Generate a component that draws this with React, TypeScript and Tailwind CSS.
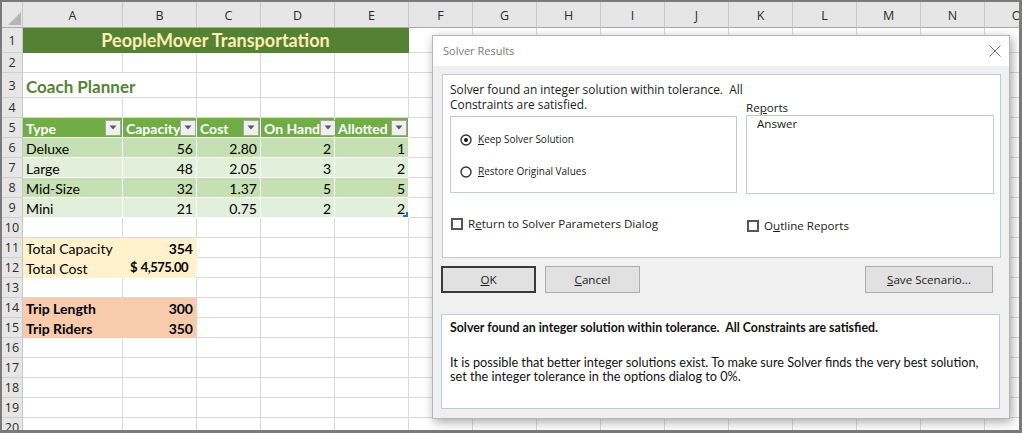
import React from "react";

const COLW = ["w-[100px]", "w-[74px]", "w-[64px]", "w-[74px]", "w-[74px]"];
const LET_AE = ["A", "B", "C", "D", "E"];
const LET_FO = ["F", "G", "H", "I", "J", "K", "L", "M", "N", "O"];

function HeaderRow() {
  const hc =
    "shrink-0 bg-[#e6e6e6] border-r border-b border-r-[#c8c8c8] border-b-[#ababab] flex items-center justify-center pt-[4px] text-[12.5px] text-[#2b2b2b] font-['Open_Sans',sans-serif]";
  return (
    <div className="flex h-[26px]">
      <div className="relative w-[21px] shrink-0 bg-[#e6e6e6] border-r border-b border-r-[#c8c8c8] border-b-[#ababab]">
        <svg className="absolute right-[1px] bottom-[2px]" width="13" height="13" viewBox="0 0 13 13">
          <path d="M13 0V13H0z" fill="#b6b6b6" />
        </svg>
      </div>
      {LET_AE.map((l, i) => (
        <div key={l} className={`${COLW[i]} ${hc}`}>
          {l}
        </div>
      ))}
      {LET_FO.map((l) => (
        <div key={l} className={`w-[64px] ${hc}`}>
          {l}
        </div>
      ))}
    </div>
  );
}

function Row({ n, h, children }: { n: number; h: string; children?: React.ReactNode }) {
  return (
    <div className={`flex ${h}`}>
      <div className="w-[21px] shrink-0 bg-[#e6e6e6] border-r border-b border-r-[#c8c8c8] border-b-[#d0d0d0] flex items-center justify-center pt-[2px] text-[12.5px] text-[#2b2b2b] font-['Open_Sans',sans-serif]">
        {n}
      </div>
      {children ??
        LET_AE.map((l, i) => <Cell key={l} i={i} />)}
      {LET_FO.map((l) => (
        <div key={l} className="w-[64px] shrink-0 border-r border-b border-[#d9d9d9]" />
      ))}
    </div>
  );
}

function Cell({
  i,
  b = "border-[#d9d9d9]",
  cls = "",
  children,
}: {
  i: number;
  b?: string;
  cls?: string;
  children?: React.ReactNode;
}) {
  return (
    <div className={`${COLW[i]} shrink-0 flex items-center border-r border-b whitespace-nowrap ${b} ${cls}`}>
      {children}
    </div>
  );
}

function Filter() {
  return (
    <div className="w-[16px] h-[16px] shrink-0 border border-[#a6a6a6] bg-[#f0f0f0] flex items-center justify-center">
      <svg width="8" height="5" viewBox="0 0 8 5">
        <path d="M0.5 0.5H7.5L4 4.5z" fill="#595959" />
      </svg>
    </div>
  );
}

function TH({ i, label }: { i: number; label: string }) {
  return (
    <Cell i={i} b="border-white" cls="bg-[#70ad47] justify-between pl-[3px] pr-[1px] text-white font-bold">
      <span className="pt-[1px]">{label}</span>
      <Filter />
    </Cell>
  );
}

const DATA: [string, string, string, string, string][] = [
  ["Deluxe", "56", "2.80", "2", "1"],
  ["Large", "48", "2.05", "3", "2"],
  ["Mid-Size", "32", "1.37", "5", "5"],
  ["Mini", "21", "0.75", "2", "2"],
];

function Dialog() {
  const border = "border border-[#c0cbd9]";
  return (
    <div className="absolute left-[432px] top-[35px] w-[578px] h-[384px] bg-[#f0f0f0] border border-[#b5b5b5] shadow-[2px_3px_10px_rgba(0,0,0,0.35)] font-['Open_Sans',sans-serif] text-[#1b1b1b]">
      <div className="h-[30px] bg-white flex items-center justify-between pl-[10px] pr-[8px]">
        <span className="text-[11px] text-[#7a7a7a]">Solver Results</span>
        <svg width="12" height="12" viewBox="0 0 12 12">
          <path d="M0.5 0.5L11.5 11.5M11.5 0.5L0.5 11.5" stroke="#707070" strokeWidth="1" />
        </svg>
      </div>
      <div className="pt-[8px]">
        <div className={`ml-[9px] w-[559px] h-[184px] bg-white ${border} pt-[7px] pl-[7px]`}>
          <div className="grid grid-cols-[287px_248px] gap-x-[9px] items-start">
            <div>
              <div className="text-[11.9px] leading-[15px] whitespace-nowrap">
                Solver found an integer solution within tolerance.&nbsp; All
                <br />
                Constraints are satisfied.
              </div>
              <div className={`mt-[4px] h-[77px] ${border} pt-[15px] pl-[9px] text-[10px] leading-[15px]`}>
                <div className="flex items-center gap-[6px]">
                  <svg width="12" height="12" viewBox="0 0 12 12">
                    <circle cx="6" cy="6" r="5" fill="white" stroke="#333" strokeWidth="1.4" />
                    <circle cx="6" cy="6" r="2" fill="#111" />
                  </svg>
                  <span>
                    <u>K</u>eep Solver Solution
                  </span>
                </div>
                <div className="mt-[17px] flex items-center gap-[6px]">
                  <svg width="12" height="12" viewBox="0 0 12 12">
                    <circle cx="6" cy="6" r="5" fill="white" stroke="#333" strokeWidth="1.4" />
                  </svg>
                  <span>
                    <u>R</u>estore Original Values
                  </span>
                </div>
              </div>
            </div>
            <div className="pt-[18px]">
              <div className="text-[11.6px] leading-[15px]">
                Re<u>p</u>orts
              </div>
              <div className={`h-[79px] ${border} pl-[10px] pt-[0px] text-[11.6px] leading-[15px]`}>Answer</div>
            </div>
          </div>
          <div className="grid grid-cols-[287px_248px] gap-x-[9px] mt-[22px] text-[11.6px] leading-[15px] items-start">
            <div className="ml-[1px] flex items-center gap-[5px]">
              <div className="w-[12px] h-[12px] border-2 border-[#555] bg-white" />
              <span>
                R<u>e</u>turn to Solver Parameters Dialog
              </span>
            </div>
            <div className="ml-[1px] mt-[2px] flex items-center gap-[5px]">
              <div className="w-[12px] h-[12px] border-2 border-[#555] bg-white" />
              <span>
                O<u>u</u>tline Reports
              </span>
            </div>
          </div>
        </div>
        <div className="flex mt-[8px] ml-[8px] text-[11.6px]">
          <div className="w-[95px] h-[27px] border-2 border-[#3a3a3a] bg-[#e1e1e1] flex items-center justify-center">
            <span>
              <u>O</u>K
            </span>
          </div>
          <div className="ml-[9px] w-[95px] h-[27px] border border-[#adadad] bg-[#e1e1e1] flex items-center justify-center">
            <span>
              <u>C</u>ancel
            </span>
          </div>
          <div className="ml-[225px] w-[128px] h-[27px] border border-[#adadad] bg-[#e1e1e1] flex items-center justify-center">
            <span>
              <u>S</u>ave Scenario...
            </span>
          </div>
        </div>
        <div className={`mt-[21px] ml-[8px] w-[559px] h-[95px] bg-white ${border} pt-[5px] pl-[8px] font-['Lato',sans-serif] text-[#111]`}>
          <div className="font-bold leading-[15px] text-[12.35px]">
            Solver found an integer solution within tolerance.&nbsp; All Constraints are satisfied.
          </div>
          <div className="mt-[20px] leading-[14px] text-[12.7px]">
            It is possible that better integer solutions exist. To make sure Solver finds the very best solution,
            <br />
            set the integer tolerance in the options dialog to 0%.
          </div>
        </div>
      </div>
    </div>
  );
}

export default function App() {
  const bands = ["bg-[#c6e0b4]", "bg-[#e2efda]", "bg-[#c6e0b4]", "bg-[#e2efda]"];
  return (
    <div className="relative w-[1022px] h-[433px] bg-[#7b7b7b] pt-[2px] pl-[2px] pr-[3px] pb-[3px] font-['Lato',sans-serif] text-[14px] text-black">
      <div className="w-full h-full overflow-hidden bg-white">
        <HeaderRow />
        <div className="flex h-[25px]">
          <div className="w-[21px] shrink-0 bg-[#e6e6e6] border-r border-b border-r-[#c8c8c8] border-b-[#d0d0d0] flex items-center justify-center pt-[3px] text-[12.5px] text-[#2b2b2b] font-['Open_Sans',sans-serif]">
            1
          </div>
          <div className="w-[386px] shrink-0 bg-[#548235] border-r border-b border-[#548235] flex items-center justify-center pt-[1px] text-[18px] font-bold text-[#ffeeb2]">
            PeopleMover Transportation
          </div>
          {LET_FO.map((l) => (
            <div key={l} className="w-[64px] shrink-0 border-r border-b border-[#d9d9d9]" />
          ))}
        </div>
        <Row n={2} h="h-[20px]" />
        <Row n={3} h="h-[25px]">
          <div className="w-[100px] shrink-0 flex items-center border-b border-[#d9d9d9] whitespace-nowrap pl-[3px] pt-[3px] text-[17px] font-bold text-[#548235] relative z-10">
            Coach Planner
          </div>
          <Cell i={1} />
          <Cell i={2} />
          <Cell i={3} />
          <Cell i={4} />
        </Row>
        <Row n={4} h="h-[20px]" />
        <Row n={5} h="h-[20px]">
          <TH i={0} label="Type" />
          <TH i={1} label="Capacity" />
          <TH i={2} label="Cost" />
          <TH i={3} label="On Hand" />
          <TH i={4} label="Allotted" />
        </Row>
        {DATA.map((r, k) => (
          <Row key={r[0]} n={6 + k} h="h-[20px]">
            <Cell i={0} b="border-white" cls={`${bands[k]} pl-[3px] pt-[1px]`}>
              {r[0]}
            </Cell>
            {[1, 2, 3, 4].map((i) => (
              <Cell key={i} i={i} b="border-white" cls={`${bands[k]} justify-end pr-[3px] pt-[1px] relative`}>
                {r[i]}
                {k === 3 && i === 4 ? (
                  <svg className="absolute right-[0px] bottom-[0px]" width="5" height="5" viewBox="0 0 5 5">
                    <path d="M5 0V5H0V3H3V0z" fill="#2f6fbf" />
                  </svg>
                ) : null}
              </Cell>
            ))}
          </Row>
        ))}
        <Row n={10} h="h-[20px]" />
        <Row n={11} h="h-[20px]">
          <Cell i={0} b="border-[#fff2cc]" cls="bg-[#fff2cc] pl-[3px] pt-[1px]">
            Total Capacity
          </Cell>
          <Cell i={1} b="border-[#fff2cc]" cls="bg-[#fff2cc] justify-end pr-[3px] pt-[1px] font-bold">
            354
          </Cell>
          <Cell i={2} />
          <Cell i={3} />
          <Cell i={4} />
        </Row>
        <Row n={12} h="h-[20px]">
          <Cell i={0} b="border-[#fff2cc]" cls="bg-[#fff2cc] pl-[3px] pt-[1px]">
            Total Cost
          </Cell>
          <Cell i={1} b="border-[#fff2cc]" cls="bg-[#fff2cc] justify-between pl-[7px] pr-[8px] pt-[1px] font-bold text-[13px]">
            <span>$</span>
            <span className="tracking-[-0.5px]">4,575.00</span>
          </Cell>
          <Cell i={2} />
          <Cell i={3} />
          <Cell i={4} />
        </Row>
        <Row n={13} h="h-[20px]" />
        <Row n={14} h="h-[20px]">
          <Cell i={0} b="border-[#f8cbad]" cls="bg-[#f8cbad] pl-[3px] pt-[1px] font-bold">
            Trip Length
          </Cell>
          <Cell i={1} b="border-[#f8cbad]" cls="bg-[#f8cbad] justify-end pr-[3px] pt-[1px] font-bold">
            300
          </Cell>
          <Cell i={2} />
          <Cell i={3} />
          <Cell i={4} />
        </Row>
        <Row n={15} h="h-[20px]">
          <Cell i={0} b="border-[#f8cbad]" cls="bg-[#f8cbad] pl-[3px] pt-[1px] font-bold">
            Trip Riders
          </Cell>
          <Cell i={1} b="border-[#f8cbad]" cls="bg-[#f8cbad] justify-end pr-[3px] pt-[1px] font-bold">
            350
          </Cell>
          <Cell i={2} />
          <Cell i={3} />
          <Cell i={4} />
        </Row>
        <Row n={16} h="h-[20px]" />
        <Row n={17} h="h-[20px]" />
        <Row n={18} h="h-[20px]" />
        <Row n={19} h="h-[20px]" />
        <Row n={20} h="h-[20px]" />
      </div>
      <Dialog />
    </div>
  );
}
